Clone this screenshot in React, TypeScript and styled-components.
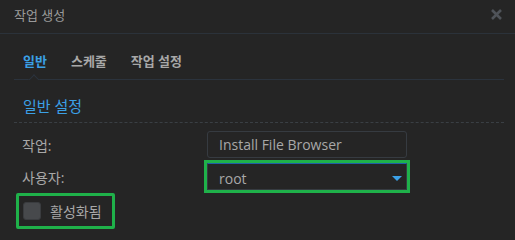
import React from 'react';
import styled, { createGlobalStyle } from 'styled-components';

const GlobalStyle = createGlobalStyle`
	html, body {
		margin: 0;
		padding: 0;
		background: #252525;
	}
	body {
		font-family: "Open Sans", "Noto Sans CJK KR", sans-serif;
		width: 515px;
		height: 240px;
		overflow: hidden;
	}
`;

const Dialog = styled.div`
	width: 515px;
	height: 240px;
	background: #252525;
	display: flex;
	flex-direction: column;
`;

const Header = styled.div`
	height: 33px;
	padding: 0 13px 0 14px;
	display: flex;
	align-items: center;
	justify-content: space-between;
	border-bottom: 1px solid #2b323a;
`;

const Title = styled.div`
	font-size: 13px;
	color: #9a9a9a;
	margin-top: -5px;
`;

const Close = styled.svg`
	width: 11px;
	height: 11px;
	margin-top: -4px;
	stroke: #4f5359;
	stroke-width: 2.6;
`;

const Body = styled.div`
	padding: 0 11px 0 14px;
`;

const Tabs = styled.div`
	position: relative;
	height: 45px;
	display: flex;
	align-items: center;
	gap: 24px;
	padding: 0 9px;
	border-bottom: 1px solid #2b333d;
`;

const Tab = styled.div<{ $active?: boolean }>`
	font-size: 13px;
	font-weight: bold;
	color: ${p => (p.$active ? '#3ba0e6' : '#a8a8a8')};
	margin-top: 7px;
`;

const Notch = styled.div`
	position: absolute;
	left: 14px;
	bottom: -1px;
	width: 12px;
	height: 6px;
	overflow: hidden;
	&::before {
		content: '';
		position: absolute;
		left: 2px;
		top: 2px;
		width: 7px;
		height: 7px;
		background: #252525;
		border-left: 1px solid #2b333d;
		border-top: 1px solid #2b333d;
		transform: rotate(45deg);
	}
`;

const SectionTitle = styled.div`
	font-size: 15px;
	color: #3ba0e6;
	padding: 15px 9px 6px;
	border-bottom: 1px dashed #3a3f44;
`;

const Form = styled.div`
	display: grid;
	grid-template-columns: 185px 200px;
	grid-auto-rows: 27px;
	align-items: center;
	padding: 8px 0 0 8px;
	row-gap: 5px;
`;

const Label = styled.div`
	font-size: 14px;
	color: #a8a8a8;
`;

const Field = styled.div`
	height: 27px;
	box-sizing: border-box;
	border: 1px solid #363b41;
	border-radius: 3px;
	display: flex;
	align-items: center;
	padding: 0 11px;
	font-size: 14px;
	color: #a8a8a8;
`;

const SelectField = styled(Field)`
	border-top-color: #1f5fa8;
	border-radius: 0;
	justify-content: space-between;
	padding: 3px 4px 0 11px;
	outline: 3px solid #1fb14a;
	outline-offset: 0px;
`;

const Arrow = styled.div`
	width: 0;
	height: 0;
	border-left: 5px solid transparent;
	border-right: 5px solid transparent;
	border-top: 5px solid #3ba0e6;
`;

const CheckRow = styled.div`
	margin: 3px 0 0 2px;
	width: 99px;
	height: 36px;
	box-sizing: border-box;
	border: 3px solid #1fb14a;
	border-radius: 2px;
	display: flex;
	align-items: center;
	padding-left: 4px;
	gap: 9px;
`;

const Box = styled.div`
	width: 18px;
	height: 18px;
	box-sizing: border-box;
	border-radius: 3px;
	background: #47494c;
	border: 1px solid #3a3c3f;
`;

export default function App() {
	return (
		<Dialog>
			<GlobalStyle />
			<Header>
				<Title>작업 생성</Title>
				<Close viewBox="0 0 11 11">
					<path d="M1 1 L10 10 M10 1 L1 10" />
				</Close>
			</Header>
			<Body>
				<Tabs>
					<Tab $active>일반</Tab>
					<Tab>스케줄</Tab>
					<Tab>작업 설정</Tab>
					<Notch />
				</Tabs>
				<SectionTitle>일반 설정</SectionTitle>
				<Form>
					<Label>작업:</Label>
					<Field>Install File Browser</Field>
					<Label>사용자:</Label>
					<SelectField>
						root
						<Arrow />
					</SelectField>
				</Form>
				<CheckRow>
					<Box />
					<Label>활성화됨</Label>
				</CheckRow>
			</Body>
		</Dialog>
	);
}
